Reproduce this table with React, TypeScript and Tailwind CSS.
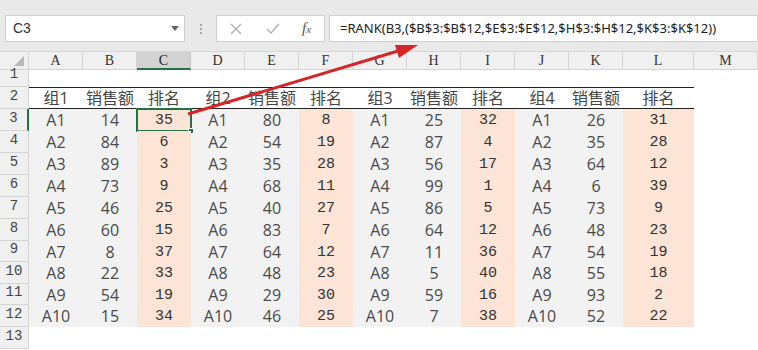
import React from 'react';

const groups = [
  { name: '组1', sales: [14, 84, 89, 73, 46, 60, 8, 22, 54, 15], rank: [35, 6, 3, 9, 25, 15, 37, 33, 19, 34] },
  { name: '组2', sales: [80, 54, 35, 68, 40, 83, 64, 48, 29, 46], rank: [8, 19, 28, 11, 27, 7, 12, 23, 30, 25] },
  { name: '组3', sales: [25, 87, 56, 99, 86, 64, 11, 5, 59, 7], rank: [32, 4, 17, 1, 5, 12, 36, 40, 16, 38] },
  { name: '组4', sales: [26, 35, 64, 6, 73, 48, 54, 55, 93, 52], rank: [31, 28, 12, 39, 9, 23, 19, 18, 2, 22] },
];

const cols = ['A', 'B', 'C', 'D', 'E', 'F', 'G', 'H', 'I', 'J', 'K', 'L', 'M'];

// row 3..12 heights, they add up to 218px like the screenshot
const bodyHeights = ['h-[22px]', 'h-[22px]', 'h-[22px]', 'h-[22px]', 'h-[22px]', 'h-[22px]', 'h-[21px]', 'h-[22px]', 'h-[21px]', 'h-[22px]'];

const sans = 'font-["Open_Sans","Noto_Sans_CJK_SC",sans-serif]';
const rowHead = 'flex items-end justify-center pb-[1px] bg-[#f0f0f0] border-r border-b border-[#d4d4d4] text-[14px] text-[#444] font-["Liberation_Mono",monospace]';

function RowHeader({ n, active, h }: { n: number; active?: boolean; h: string }) {
  return (
    <div className={`${h} ${rowHead} ${active ? 'bg-[#d2d2d2] border-r-2 border-r-[#217346]' : ''}`}>{n}</div>
  );
}

export default function App() {
  return (
    <div className={`relative w-[758px] h-[350px] overflow-hidden bg-white ${sans}`}>
      {/* formula bar */}
      <div className="h-[52px] bg-[#e9e9e9] border-b border-[#d6d6d6] flex items-start pt-[15px] pl-[5px]">
        <div className="w-[180px] h-[27px] bg-white border border-[#cfcfcf] flex items-center justify-between pl-[7px] pr-[5px]">
          <span className="text-[14px] text-[#333] font-['Liberation_Sans',sans-serif]">C3</span>
          <span className="w-0 h-0 border-l-[4px] border-r-[4px] border-t-[5px] border-l-transparent border-r-transparent border-t-[#666]" />
        </div>
        <div className="w-[31px] h-[27px] flex flex-col items-center justify-center gap-[2px]">
          <span className="w-[2px] h-[2px] bg-[#a8a8a8]" />
          <span className="w-[2px] h-[2px] bg-[#a8a8a8]" />
          <span className="w-[2px] h-[2px] bg-[#a8a8a8]" />
        </div>
        <div className="w-[109px] h-[27px] bg-white border border-[#cfcfcf] flex items-center text-[#b8b8b8]">
          <svg width="14" height="14" viewBox="0 0 14 14" className="ml-[12px]">
            <path d="M2 2 L12 12 M12 2 L2 12" stroke="#b0b0b0" strokeWidth="1.4" fill="none" />
          </svg>
          <svg width="16" height="14" viewBox="0 0 16 14" className="ml-[22px]">
            <path d="M2 7 L6 11 L14 2" stroke="#b0b0b0" strokeWidth="1.4" fill="none" />
          </svg>
          <span className="ml-[21px] text-[15px] italic text-[#555] font-['Liberation_Serif',serif]">f<span className="text-[11px]">x</span></span>
        </div>
        <div className="ml-[4px] flex-1 h-[27px] bg-white border border-[#cfcfcf] flex items-center pl-[10px]">
          <span className="text-[13px] text-[#222] font-['Noto_Sans',sans-serif]">
            =RANK(B3,($B$3:$B$12,$E$3:$E$12,$H$3:$H$12,$K$3:$K$12))
          </span>
        </div>
      </div>

      {/* sheet */}
      <div className="grid grid-cols-[29px_repeat(11,54px)_71px_1fr]">
        {/* column headers */}
        <div className="h-[18px] bg-[#f0f0f0] border-r border-b border-[#d4d4d4] flex items-end justify-end pr-[4px] pb-[3px]">
          <span className="w-0 h-0 border-l-[10px] border-t-[10px] border-l-transparent border-t-transparent border-r-0 border-b-0 [border-bottom:10px_solid_#b9b9b9]" />
        </div>
        {cols.map((c) => (
          <div
            key={c}
            className={
              c === 'C'
                ? 'h-[18px] bg-[#d3d3d3] border-r border-[#c8c8c8] border-b-2 border-b-[#217346] flex items-center justify-center text-[14px] text-[#222] font-["Liberation_Serif",serif]'
                : 'h-[18px] bg-[#f0f0f0] border-r border-b border-[#d4d4d4] flex items-center justify-center text-[14px] text-[#333] font-["Liberation_Serif",serif]'
            }
          >
            {c}
          </div>
        ))}

        {/* row 1 */}
        <RowHeader n={1} h="h-[17px]" />
        <div className="col-span-13 h-[17px]" />

        {/* row 2 */}
        <RowHeader n={2} h="h-[22px]" />
        {groups.map((g) => (
          <React.Fragment key={g.name}>
            <div className="h-[22px] border-y border-[#222] flex items-center justify-center text-[16px] text-[#444]">{g.name}</div>
            <div className="h-[22px] border-y border-[#222] flex items-center justify-center text-[16px] text-[#444]">销售额</div>
            <div className="h-[22px] border-y border-[#222] flex items-center justify-center text-[16px] text-[#444]">排名</div>
          </React.Fragment>
        ))}
        <div className="h-[22px]" />

        {/* rows 3..12 */}
        {bodyHeights.map((h, i) => (
          <React.Fragment key={i}>
            <RowHeader n={i + 3} h={h} active={i === 0} />
            {groups.map((g, gi) => (
              <React.Fragment key={g.name}>
                <div className={`${h} bg-[#f2f2f2] flex items-center justify-center text-[16px] text-[#4a4a4a]`}>A{i + 1}</div>
                <div className={`${h} bg-[#f2f2f2] flex items-center justify-center text-[16px] text-[#4a4a4a]`}>{g.sales[i]}</div>
                <div className={`${h} relative bg-[#fce4d6] flex items-center justify-center pt-[3px] text-[15px] text-[#333] font-["Liberation_Mono",monospace]`}>
                  {g.rank[i]}
                  {i === 0 && gi === 0 && (
                    <div className="absolute -left-px -top-px -right-px -bottom-px border-2 border-[#217346]">
                      <div className="absolute -right-[4px] -bottom-[4px] w-[6px] h-[6px] bg-[#217346] border border-white" />
                    </div>
                  )}
                </div>
              </React.Fragment>
            ))}
            <div className={h} />
          </React.Fragment>
        ))}

        {/* row 13 */}
        <RowHeader n={13} h="h-[22px]" />
        <div className="col-span-13 h-[22px]" />
      </div>

      {/* red arrow annotation */}
      <svg className="absolute inset-0 pointer-events-none" width="758" height="350" viewBox="0 0 758 350">
        <line x1="188" y1="114" x2="398" y2="51" stroke="#d3262a" strokeWidth="3" />
        <polygon points="418,45 399,58 395,45" fill="#d3262a" />
      </svg>
    </div>
  );
}
